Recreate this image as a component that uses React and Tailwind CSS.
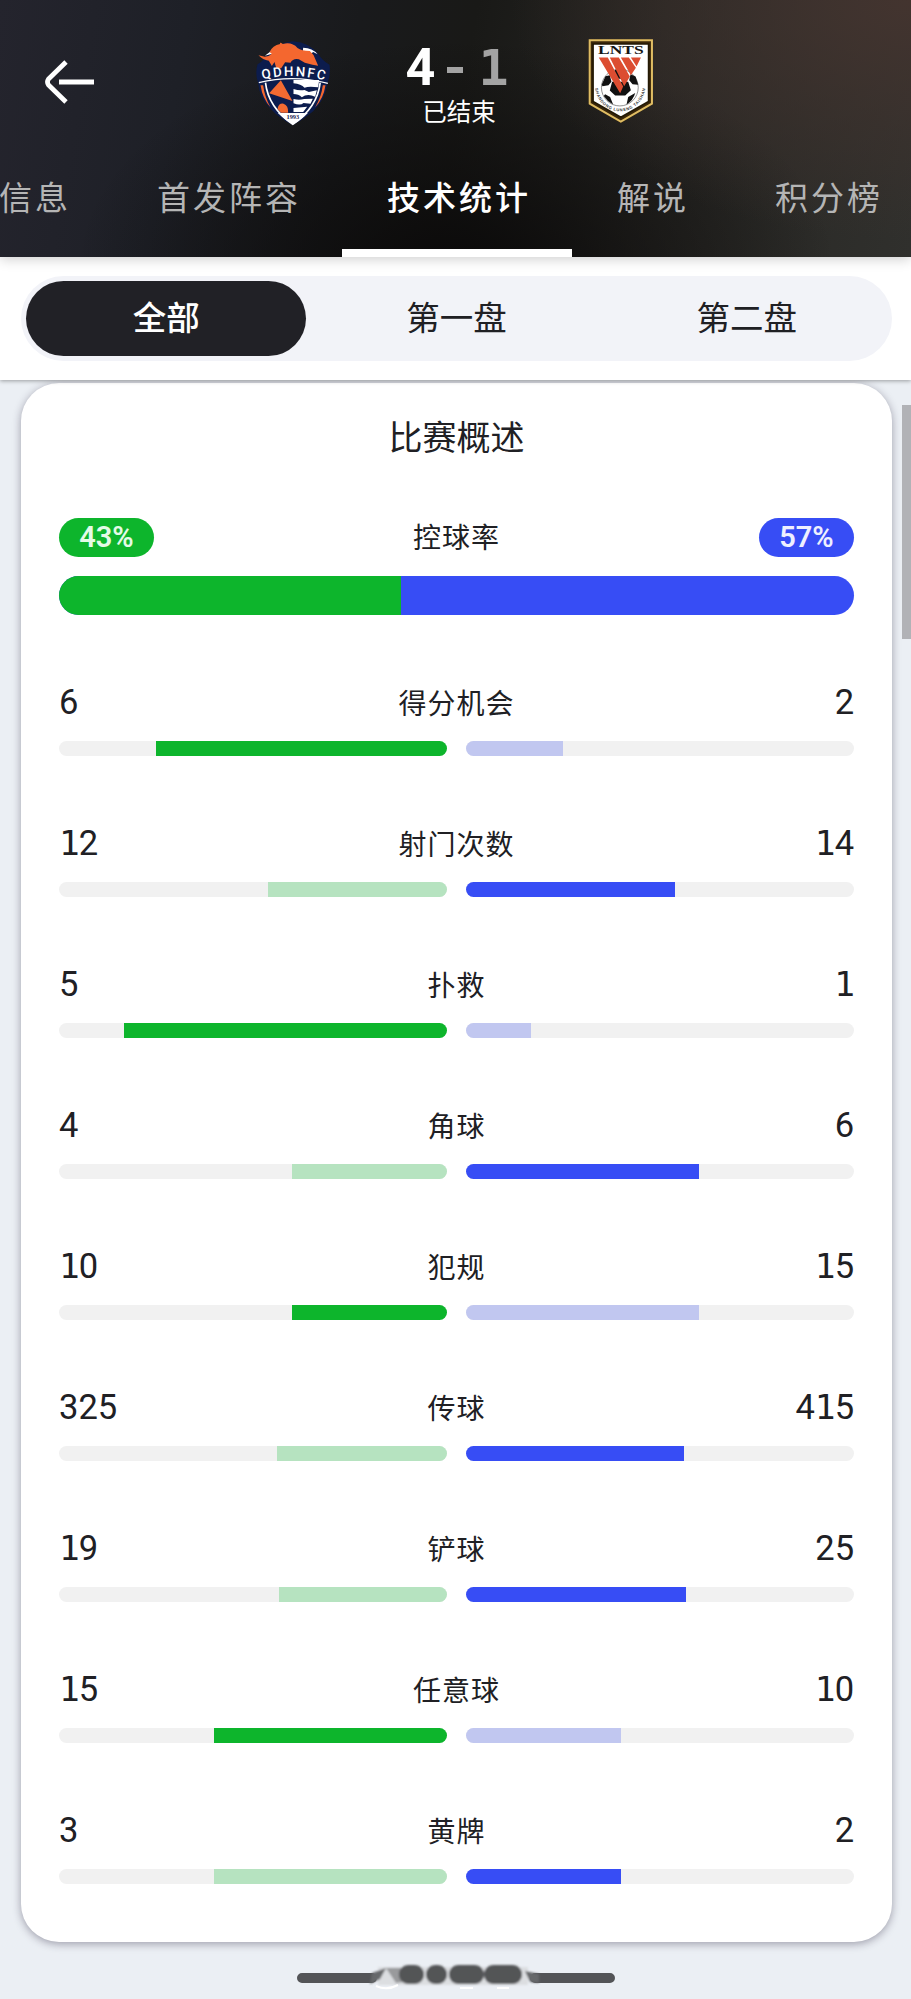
import React, { useState } from 'react';

const tabs = ['信息', '首发阵容', '技术统计', '解说', '积分榜'];
const periods = ['全部', '第一盘', '第二盘'];

const stats = [
    { label: '得分机会', home: 6, away: 2 },
    { label: '射门次数', home: 12, away: 14 },
    { label: '扑救', home: 5, away: 1 },
    { label: '角球', home: 4, away: 6 },
    { label: '犯规', home: 10, away: 15, lowerWins: true },
    { label: '传球', home: 325, away: 415 },
    { label: '铲球', home: 19, away: 25 },
    { label: '任意球', home: 15, away: 10 },
    { label: '黄牌', home: 3, away: 2, lowerWins: true },
];

// The one gets a slab foot from the mono face, on the same advance as the rest
function Digits({ value }) {
    return String(value).split('').map((char, i) =>
        char === '1' ? <span key={i} className="font-['DejaVu_Sans_Mono',monospace] tracking-[-1px]">1</span> : char
    );
}

function HomeCrest() {
    return (
        <svg viewBox="75 60 230 258" className="w-[77px] h-[86px] shrink-0">
            <path d="M82 133 Q98 124 104 110 Q138 68 188 64 Q240 68 266 104 Q275 120 298 134 Q302 165 292 190 Q284 240 249 274 Q222 298 188 315 Q150 297 122 267 Q87 232 84 190 Q74 160 82 133Z" fill="#0c1c4d" />
            <path d="M86 188 Q188 163 293 190" fill="none" stroke="#fff" strokeWidth="4" />
            <path d="M106 188 Q114 262 188 313 Q262 262 270 188" fill="#0c1c4d" stroke="#fff" strokeWidth="5" />
            <path d="M91 196 Q97 236 121 262 Q103 230 99 196Z M286 196 Q280 236 255 262 Q274 230 278 196Z" fill="#f4672f" />
            <path d="M190 180 H267 L264 202 Q236 198 223 203 Q213 192 190 190Z M190 207 Q207 213 223 210 L236 216 L260 211 L255 230 Q231 219 215 232 Q205 222 190 222Z M190 237 Q207 241 222 237 L248 236 L241 251 L220 249 Q211 258 190 250Z M190 264 L231 260 L219 276 H190Z" fill="#fff" />
            <path d="M152 181 L117 220 L187 243Z M142 267 Q145 249 160 251 Q175 256 174 278 L153 278Z" fill="#f26a32" />
            <path d="M143 279 H233 Q213 301 188 313 Q163 300 143 279Z" fill="#fff" />
            <path d="M219 83 Q247 83 262 103 L249 96 L242 101 L218 93Z M104 107 L122 94 L126 101Z" fill="#fff" />
            <path d="M85 106 L104 110 Q118 109 125 101 L118 96 Q127 77 150 72 Q147 64 158 72 Q185 65 202 84 Q214 93 239 93 L250 105 L264 137 L247 134 L224 128 L206 118 Q189 114 181 128 L165 127 L153 145 L138 143 L133 126 L125 138 L116 122 Q98 120 85 106Z" fill="#f4672f" />
            <path id="crest-arc" d="M97 178 Q188 156 288 182" fill="none" />
            <text fill="#fff" className="font-['Roboto',sans-serif] text-[40px] font-medium">
                <textPath href="#crest-arc" textLength="188" lengthAdjust="spacing">
                    QDHNFC
                </textPath>
            </text>
            <text x="188" y="296" textAnchor="middle" fill="#18204c" className="font-['Liberation_Serif',serif] text-[19px] font-bold">1993</text>
        </svg>
    );
}

function AwayCrest() {
    return (
        <svg viewBox="50 55 200 257" className="w-[67px] h-[86px] shrink-0">
            <path d="M55 59 H247 V253 L151 309 L55 253Z" fill="#3a270b" />
            <path d="M58 62 H244 V251 L151 305 L58 251Z" fill="none" stroke="#dfbd64" strokeWidth="6" />
            <path d="M68 73 H234 V245 L151 292 L68 245Z" fill="#fff" stroke="#231905" strokeWidth="5" />
            <circle cx="148" cy="203" r="55" fill="#fff" stroke="#222" strokeWidth="1.5" />
            <path d="M94 194 L105 169 L118 166 L123 186 L114 196 L96 199Z M133 151 Q148 144 166 151 L171 177 H126Z M180 163 L195 170 L203 195 L186 193 L176 181Z M125 186 L173 186 L181 211 L164 227 H134 L118 212Z M104 223 L119 231 L128 254 Q111 245 100 228Z M173 231 L194 219 Q188 241 168 254Z" fill="#111" />
            {/* red pennants */}
            <path d="M85 113 H112 L158 200 L149 220Z M118 113 H145 L178 170 L161 199Z M151 113 H175 L196 144 L181 166Z M181 113 H211 L198 140Z" fill="#dc4d31" />
            <text x="151" y="103" textAnchor="middle" textLength="136" lengthAdjust="spacingAndGlyphs" fill="#151515" className="font-['Liberation_Serif',serif] text-[38px] font-bold">LNTS</text>
            <path id="away-arc" d="M74 205 C86 296 213 298 225 202" fill="none" />
            <text fill="#333" className="font-['Liberation_Sans',sans-serif] text-[12px] font-bold">
                <textPath href="#away-arc" textLength="222">SHANDONG LUNENG TAISHAN</textPath>
            </text>
        </svg>
    );
}

function StatRow({ label, home, away, lowerWins }) {
    const total = home + away;
    const homeLeads = lowerWins ? home < away : home > away;
    return (
        <div className="h-[141px]">
            <div className="flex items-center h-[50px] text-[34.5px] font-['Roboto',sans-serif]">
                <span className="flex-1"><Digits value={home} /></span>
                <span className="-mt-[3px] text-[28px] tracking-[1px] font-['Noto_Sans_CJK_SC',sans-serif]">{label}</span>
                <span className="flex-1 text-right"><Digits value={away} /></span>
            </div>
            <div className="flex gap-[19px] mt-[13px]">
                <div className="flex flex-1 justify-end h-[15px] rounded-full overflow-hidden bg-[#f1f1f1]">
                    <div className={homeLeads ? 'bg-[#0db52c]' : 'bg-[#b6e3c0]'} style={{ width: `${(home / total) * 100}%` }}></div>
                </div>
                <div className="flex flex-1 h-[15px] rounded-full overflow-hidden bg-[#f1f1f1]">
                    <div className={homeLeads ? 'bg-[#c1c7f0]' : 'bg-[#374df5]'} style={{ width: `${(away / total) * 100}%` }}></div>
                </div>
            </div>
        </div>
    );
}

function App() {
    const [tab, setTab] = useState(2);
    const [period, setPeriod] = useState(0);

    return (
        <div className="relative w-[911px] h-[1999px] overflow-hidden flex flex-col bg-[#ebeff4] text-[#202024] font-['Noto_Sans_CJK_SC',sans-serif]">
            {/* Header */}
            <header className="relative z-20 h-[257px] shrink-0 shadow-[0_2px_12px_rgba(0,0,0,0.2)] bg-[radial-gradient(ellipse_400px_240px_at_100%_0%,#43342f_0%,#43342f00_100%),radial-gradient(ellipse_380px_230px_at_50%_105%,#0b0a0a_0%,#0b0a0a00_100%),linear-gradient(100deg,#24242d_0%,#1e2027_20%,#191a1c_38%,#191917_50%,#262522_70%,#30302d_100%)]">
                <div className="flex items-start h-[140px] pl-[45px]">
                    <svg viewBox="0 0 49 44" className="w-[49px] h-[44px] mt-[60px] shrink-0" fill="none" stroke="#fff" strokeWidth="4.8">
                        <path d="M21 2 L3.5 19 Q1.5 22 3.5 25 L21 42 M14 22 H49" />
                    </svg>
                    <div className="ml-[161px] mt-[40px]"><HomeCrest /></div>
                    <div className="w-[120px] ml-[67px] mt-[38px] flex flex-col items-center">
                        <div className="flex justify-center items-center h-[60px] -ml-[4px] font-['Roboto',sans-serif] font-bold text-[52px] text-[#a3a3a3]">
                            <span className="w-[30px] text-center text-white">4</span>
                            <span className="w-[16px] h-[6px] ml-[12px] mr-[15px] mt-[4px] bg-[#a3a3a3]"></span>
                            <span className="font-['DejaVu_Sans_Mono',monospace] text-[50px]">1</span>
                        </div>
                        <div className="-mt-[5px] text-[24.5px] leading-[36px] text-white">已结束</div>
                    </div>
                    <div className="ml-[68px] mt-[38px]"><AwayCrest /></div>
                </div>
                <nav className="flex h-[117px] -ml-[46px]">
                    {tabs.map((name, i) => (
                        <button
                            key={name}
                            onClick={() => setTab(i)}
                            className={`shrink-0 pb-[4px] pl-[45px] pr-[41px] whitespace-nowrap text-[33px] tracking-[3px] border-t-8 border-t-transparent border-b-8 ${tab === i ? 'text-white font-medium border-b-white' : 'text-[#b5b5b5] border-b-transparent'}`}
                        >
                            {name}
                        </button>
                    ))}
                </nav>
            </header>

            {/* Period switch */}
            <div className="relative z-10 h-[123px] shrink-0 pt-[19px] pl-[21px] pr-[19px] bg-white shadow-[0_1px_4px_rgba(0,0,0,0.35)]">
                <div className="flex h-[85px] rounded-full bg-[#f2f3f8]">
                    {periods.map((name, i) => (
                        <button
                            key={name}
                            onClick={() => setPeriod(i)}
                            className={`flex-1 m-[5px] pb-[4px] rounded-full text-[33.5px] ${period === i ? 'bg-[#212126] text-white font-medium' : ''}`}
                        >
                            {name}
                        </button>
                    ))}
                </div>
            </div>

            {/* Stats card */}
            <main className="h-[1559px] shrink-0 mt-[3px] ml-[21px] mr-[19px] pt-[28px] px-[38px] rounded-[38px] bg-white shadow-[0_2px_8px_rgba(40,35,60,0.4)]">
                <h2 className="h-[50px] leading-[50px] text-center text-[34px]">比赛概述</h2>
                <div className="flex justify-between items-center h-[39px] mt-[57px] font-['Roboto',sans-serif]">
                    <span className="flex items-center justify-center w-[95px] h-[39px] rounded-full bg-[#0db52c] text-[#e4fbe7] text-[29px] font-semibold">43%</span>
                    <span className="-mt-[3px] text-[28px] tracking-[1px] font-['Noto_Sans_CJK_SC',sans-serif]">控球率</span>
                    <span className="flex items-center justify-center w-[95px] h-[39px] rounded-full bg-[#374df5] text-[#eef0ff] text-[29px] font-semibold">57%</span>
                </div>
                <div className="flex h-[39px] mt-[19px] mb-[63px] rounded-full overflow-hidden bg-[#374df5]">
                    <div className="w-[43%] bg-[#0db52c]"></div>
                </div>
                {stats.map((stat) => (
                    <StatRow key={stat.label} {...stat} />
                ))}
            </main>

            {/* Scrollbar */}
            <div className="absolute right-0 top-[405px] w-[9px] h-[234px] bg-[#b1b2b6]"></div>

            {/* Home indicator */}
            <svg viewBox="0 0 320 30" className="w-[320px] h-[30px] mt-[19px] ml-[296px] shrink-0">
                <defs>
                    <filter id="smudge" x="-20%" y="-50%" width="140%" height="200%">
                        <feGaussianBlur stdDeviation="1.2" />
                    </filter>
                </defs>
                <path d="M6 17 H76 M239 17 H314" stroke="#535457" strokeWidth="10" strokeLinecap="round" />
                <g filter="url(#smudge)">
                    <rect x="82" y="6" width="150" height="18" fill="#dcdee1" />
                    <path d="M74 23 L76 12 L90 7 L84 18Z M229 10 L243 13 V22 L234 21Z" fill="#66676a" />
                    <path d="M90 7 H107 V21 L100 22Z" fill="#999a9c" />
                    <rect x="103" y="4" width="25" height="19" rx="9" fill="#535457" />
                    <rect x="130" y="4" width="21" height="19" rx="9" fill="#535457" />
                    <rect x="153" y="4" width="35" height="19" rx="9" fill="#535457" />
                    <rect x="188" y="4" width="38" height="19" rx="9" fill="#535457" />
                </g>
                <path d="M80 25 Q91 30 102 24 M164 27 H177 M201 27 H213" fill="none" stroke="#fff" strokeWidth="2" />
            </svg>
        </div>
    );
}

export default App;
